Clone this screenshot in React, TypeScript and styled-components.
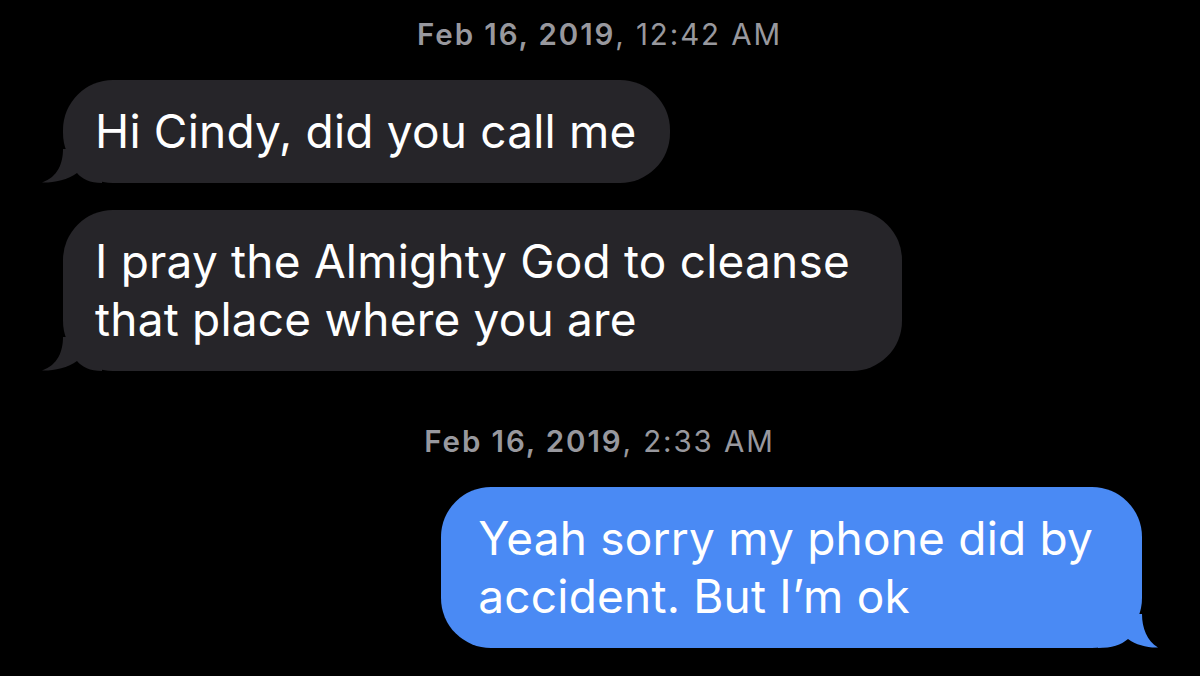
import styled, { createGlobalStyle } from "styled-components";

const GlobalStyle = createGlobalStyle`
  html, body {
    margin: 0;
    padding: 0;
    background: #000;
  }
  body {
    font-family: Inter, "Liberation Sans", sans-serif;
    -webkit-font-smoothing: antialiased;
  }
`;

const Thread = styled.div`
  width: 1200px;
  height: 676px;
  overflow: hidden;
  background: #000;
  display: flex;
  flex-direction: column;
  padding: 17px 58px 0 63px;
  box-sizing: border-box;
`;

const Stamp = styled.div<{ gapTop: number }>`
  align-self: center;
  margin-top: ${(p) => p.gapTop}px;
  margin-bottom: 28px;
  padding-right: 6px;
  font-size: 29.5px;
  line-height: 35px;
  letter-spacing: 1.9px;
  color: #98989e;
  white-space: nowrap;

  b {
    font-weight: 600;
  }
`;

const Bubble = styled.div<{ mine?: boolean; gapTop?: number; padRight: number }>`
  position: relative;
  align-self: ${(p) => (p.mine ? "flex-end" : "flex-start")};
  margin-top: ${(p) => p.gapTop || 0}px;
  padding: 22px ${(p) => p.padRight}px 23px ${(p) => (p.mine ? 37 : 32)}px;
  border-radius: 50px;
  background: ${(p) => (p.mine ? "#4a8af4" : "#262529")};
  color: #fff;
  font-size: 46px;
  line-height: 58px;
  letter-spacing: 0.2px;
  white-space: nowrap;
`;

const Text = styled.span`
  position: relative;
  z-index: 1;
`;

const Tail = styled.svg<{ mine?: boolean }>`
  position: absolute;
  bottom: 0;
  width: 60px;
  height: 34px;
  ${(p) => (p.mine ? "right: -16px; transform: scaleX(-1);" : "left: -21px;")}
`;

type MsgProps = { lines: string[]; mine?: boolean; gapTop?: number; padRight: number };

function Message({ lines, mine, gapTop, padRight }: MsgProps) {
  const fill = mine ? "#4a8af4" : "#262529";
  return (
    <Bubble mine={mine} gapTop={gapTop} padRight={padRight}>
      <Tail mine={mine} viewBox="0 0 60 34">
        {mine ? (
          <path
            d="M16 0 C16 14 11 27 0 33.5 C10 34 22 31 30 25 C37 31 46 34 60 34 L60 0 Z"
            fill={fill}
          />
        ) : (
          <path
            d="M21 0 C21 14 16 28 0 33.5 C10 34 26 31 35 24 C40 30 48 34 60 34 L60 0 Z"
            fill={fill}
          />
        )}
      </Tail>
      <Text>
        {lines.map((l, i) => (
          <span key={i}>
            {i > 0 && <br />}
            {l}
          </span>
        ))}
      </Text>
    </Bubble>
  );
}

export default function App() {
  return (
    <>
      <GlobalStyle />
      <Thread>
        <Stamp gapTop={0}>
          <b>Feb 16, 2019</b>, 12:42 AM
        </Stamp>
        <Message padRight={33} lines={["Hi Cindy, did you call me"]} />
        <Message
          gapTop={27}
          padRight={52}
          lines={["I pray the Almighty God to cleanse", "that place where you are"]}
        />
        <Stamp gapTop={53}>
          <b>Feb 16, 2019</b>, 2:33 AM
        </Stamp>
        <Message
          mine
          padRight={49}
          lines={["Yeah sorry my phone did by", "accident. But I\u2019m ok"]}
        />
      </Thread>
    </>
  );
}
